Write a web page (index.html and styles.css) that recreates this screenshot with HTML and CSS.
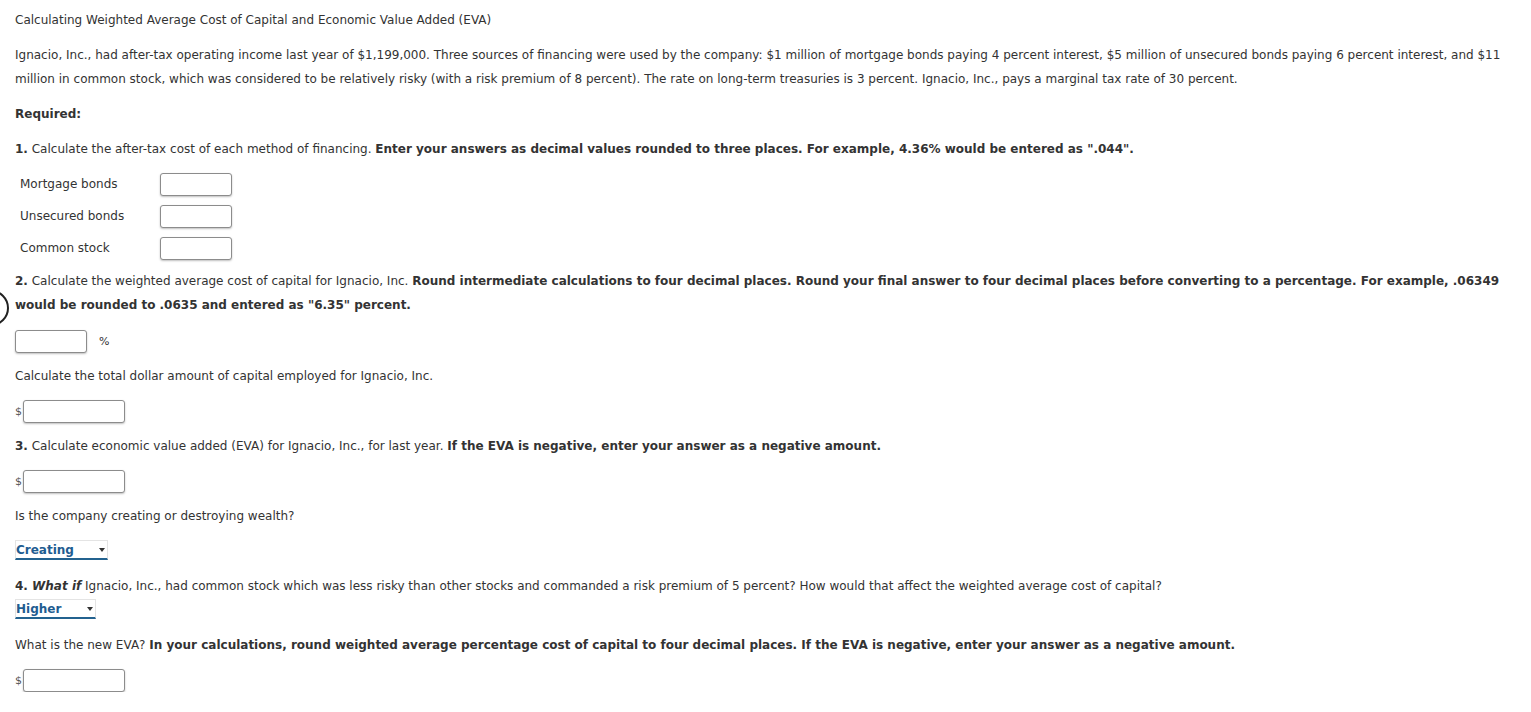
FILE: index.html
```html
<!DOCTYPE html>
<html>
<head>
<meta charset="utf-8">
<link rel="stylesheet" href="styles.css">
</head>
<body>
<div class="ring"></div>
<div class="page">
  <p class="title">Calculating Weighted Average Cost of Capital and Economic Value Added (EVA)</p>
  <p class="para">Ignacio, Inc., had after-tax operating income last year of $1,199,000. Three sources of financing were used by the company: $1 million of mortgage bonds paying 4 percent interest, $5 million of unsecured bonds paying 6 percent interest, and $11 million in common stock, which was considered to be relatively risky (with a risk premium of 8 percent). The rate on long-term treasuries is 3 percent. Ignacio, Inc., pays a marginal tax rate of 30 percent.</p>
  <p class="para"><b>Required:</b></p>
  <p class="para"><b>1.</b> Calculate the after-tax cost of each method of financing. <b>Enter your answers as decimal values rounded to three places. For example, 4.36% would be entered as ".044".</b></p>
  <div class="table">
    <div class="trow"><span class="tlabel">Mortgage bonds</span><span class="box"></span></div>
    <div class="trow"><span class="tlabel">Unsecured bonds</span><span class="box"></span></div>
    <div class="trow"><span class="tlabel">Common stock</span><span class="box"></span></div>
  </div>
  <p class="para q2"><b>2.</b> Calculate the weighted average cost of capital for Ignacio, Inc. <b>Round intermediate calculations to four decimal places. Round your final answer to four decimal places before converting to a percentage. For example, .06349 would be rounded to .0635 and entered as "6.35" percent.</b></p>
  <div class="inrow pct"><span class="box"></span><span class="unit">%</span></div>
  <p class="para">Calculate the total dollar amount of capital employed for Ignacio, Inc.</p>
  <div class="inrow"><span class="dollar">$</span><span class="box wide"></span></div>
  <p class="para"><b>3.</b> Calculate economic value added (EVA) for Ignacio, Inc., for last year. <b>If the EVA is negative, enter your answer as a negative amount.</b></p>
  <div class="inrow"><span class="dollar">$</span><span class="box wide"></span></div>
  <p class="para">Is the company creating or destroying wealth?</p>
  <div class="selrow"><span class="select s1">Creating<span class="caret"></span></span></div>
  <p class="para q4"><b>4. <i>What if</i></b> Ignacio, Inc., had common stock which was less risky than other stocks and commanded a risk premium of 5 percent? How would that affect the weighted average cost of capital?</p>
  <div class="selrow tight"><span class="select s2">Higher<span class="caret"></span></span></div>
  <p class="para q5">What is the new EVA? <b>In your calculations, round weighted average percentage cost of capital to four decimal places. If the EVA is negative, enter your answer as a negative amount.</b></p>
  <div class="inrow"><span class="dollar">$</span><span class="box wide"></span></div>
</div>
</body>
</html>
```
FILE: styles.css
```css
html, body {
  margin: 0;
  padding: 0;
  background: #fff;
}
body {
  font-family: "DejaVu Sans", Verdana, sans-serif;
  font-size: 12px;
  color: #333;
  position: relative;
}
.page {
  padding: 8px 8px 0 15px;
}
p {
  margin: 0;
  line-height: 24px;
}
b { color: #333; }
.title { margin-bottom: 11px; }
.para { margin-top: 11px; }
.title + .para { margin-top: 0; }
.table {
  margin-top: 7px;
  padding-left: 5px;
}
.trow {
  display: flex;
  align-items: center;
  height: 32px;
}
.tlabel { width: 140px; }
.box {
  display: inline-block;
  box-sizing: border-box;
  width: 72px;
  height: 23px;
  border: 1px solid #8c8c8c;
  border-radius: 3px;
  box-shadow: 0 1px 2px rgba(0,0,0,0.25);
  background: #fff;
}
.box.wide { width: 102px; }
.q2 { margin-top: 5px; }
.inrow {
  display: flex;
  align-items: center;
  height: 24px;
  margin-top: 11px;
}
.pct { margin-top: 12px; }
.unit { margin-left: 12px; font-size: 11px; }
.dollar { width: 8px; font-size: 11px; color: #555; }
.selrow {
  height: 24px;
  margin-top: 10px;
  display: flex;
  align-items: center;
}
.select {
  position: relative;
  display: inline-block;
  box-sizing: border-box;
  height: 20px;
  line-height: 18px;
  font-weight: bold;
  color: #1f5d91;
  border: 1px solid #e4e4e4;
  border-bottom: 2px solid #23628f;
  background: #fff;
  padding-left: 0;
}
.s1 { width: 93px; }
.s2 { width: 81px; }
.caret {
  position: absolute;
  right: 2px;
  top: 7px;
  width: 0;
  height: 0;
  border-left: 3.5px solid transparent;
  border-right: 3.5px solid transparent;
  border-top: 4px solid #333;
}
.q4 { margin-top: 12px; }
.q5 { margin-top: 13px; }
.selrow.tight { margin-top: 0; height: 22px; }
.ring {
  position: absolute;
  left: -27px;
  top: 290px;
  width: 32px;
  height: 32px;
  border: 2px solid #222;
  border-radius: 50%;
}
```
